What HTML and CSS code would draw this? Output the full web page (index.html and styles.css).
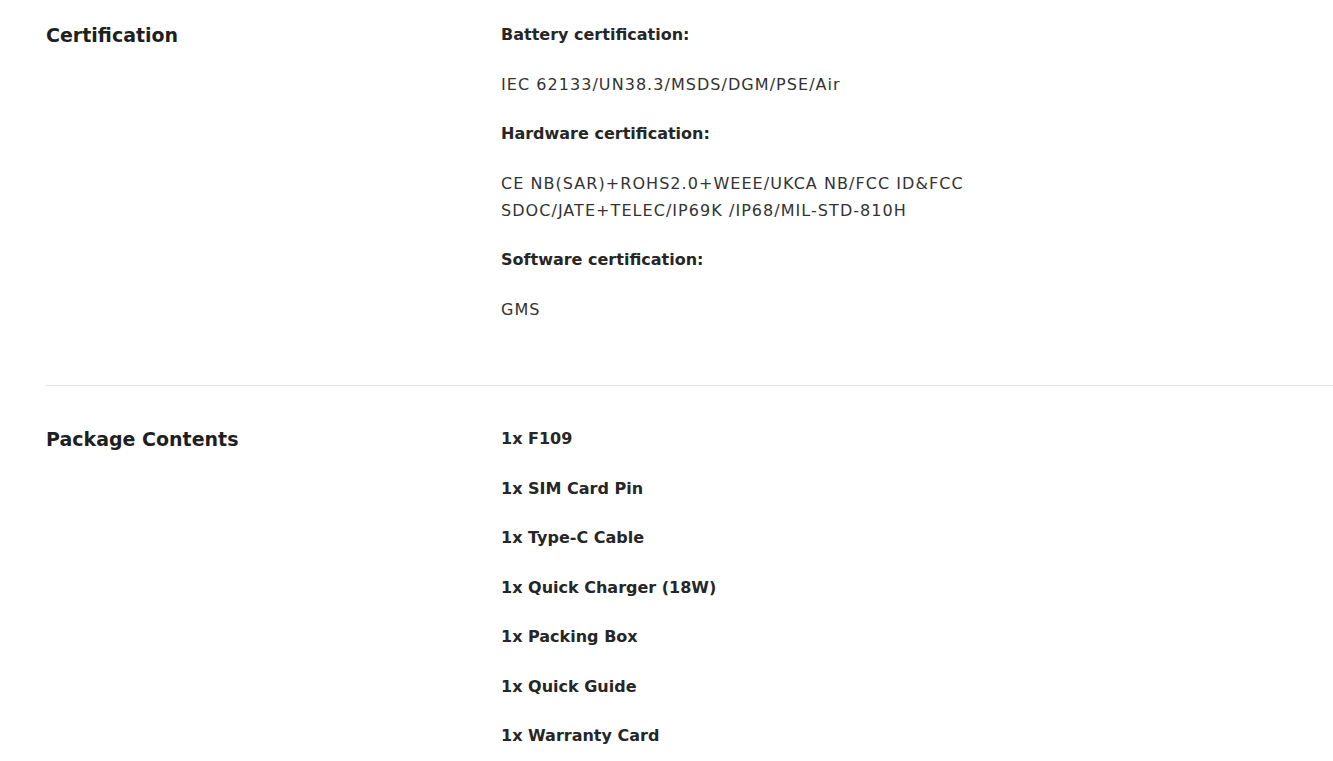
FILE: index.html
```html
<!DOCTYPE html>
<html lang="en">
<head>
<meta charset="utf-8">
<title>Specifications</title>
<link rel="stylesheet" href="styles.css">
</head>
<body>
<div class="specs">
  <section class="spec spec-first">
    <h2 class="spec-title">Certification</h2>
    <div class="spec-body">
      <p class="label">Battery certification:</p>
      <p>IEC 62133/UN38.3/MSDS/DGM/PSE/Air</p>
      <p class="label">Hardware certification:</p>
      <p>CE NB(SAR)+ROHS2.0+WEEE/UKCA NB/FCC ID&amp;FCC<br>SDOC/JATE+TELEC/IP69K /IP68/MIL-STD-810H</p>
      <p class="label">Software certification:</p>
      <p>GMS</p>
    </div>
  </section>
  <section class="spec">
    <h2 class="spec-title">Package Contents</h2>
    <div class="spec-body">
      <p class="label">1x F109</p>
      <p class="label">1x SIM Card Pin</p>
      <p class="label">1x Type-C Cable</p>
      <p class="label">1x Quick Charger (18W)</p>
      <p class="label">1x Packing Box</p>
      <p class="label">1x Quick Guide</p>
      <p class="label">1x Warranty Card</p>
    </div>
  </section>
</div>
</body>
</html>
```

FILE: styles.css
```css
html, body {
  margin: 0;
  padding: 0;
  background: #ffffff;
}
body {
  font-family: "DejaVu Sans", "Open Sans", sans-serif;
  color: #2b2b2b;
  overflow: hidden;
}
.specs {
  margin-left: 46px;
  width: 1287px;
}
.spec {
  display: grid;
  grid-template-columns: 455px 1fr;
  padding: 39px 0 40px;
  border-top: 1px solid #e6e6e6;
}
.spec-first {
  border-top: none;
  padding-top: 21px;
}
.spec-title {
  margin: 0;
  font-size: 19px;
  line-height: 29px;
  font-weight: 700;
  color: #1f1f1f;
}
.spec-body p {
  margin: 0 0 22.5px;
  font-size: 16px;
  line-height: 27px;
  letter-spacing: 1.05px;
  color: #333333;
}
.spec-body p.label {
  font-weight: 700;
  letter-spacing: 0;
  color: #262626;
}
```
